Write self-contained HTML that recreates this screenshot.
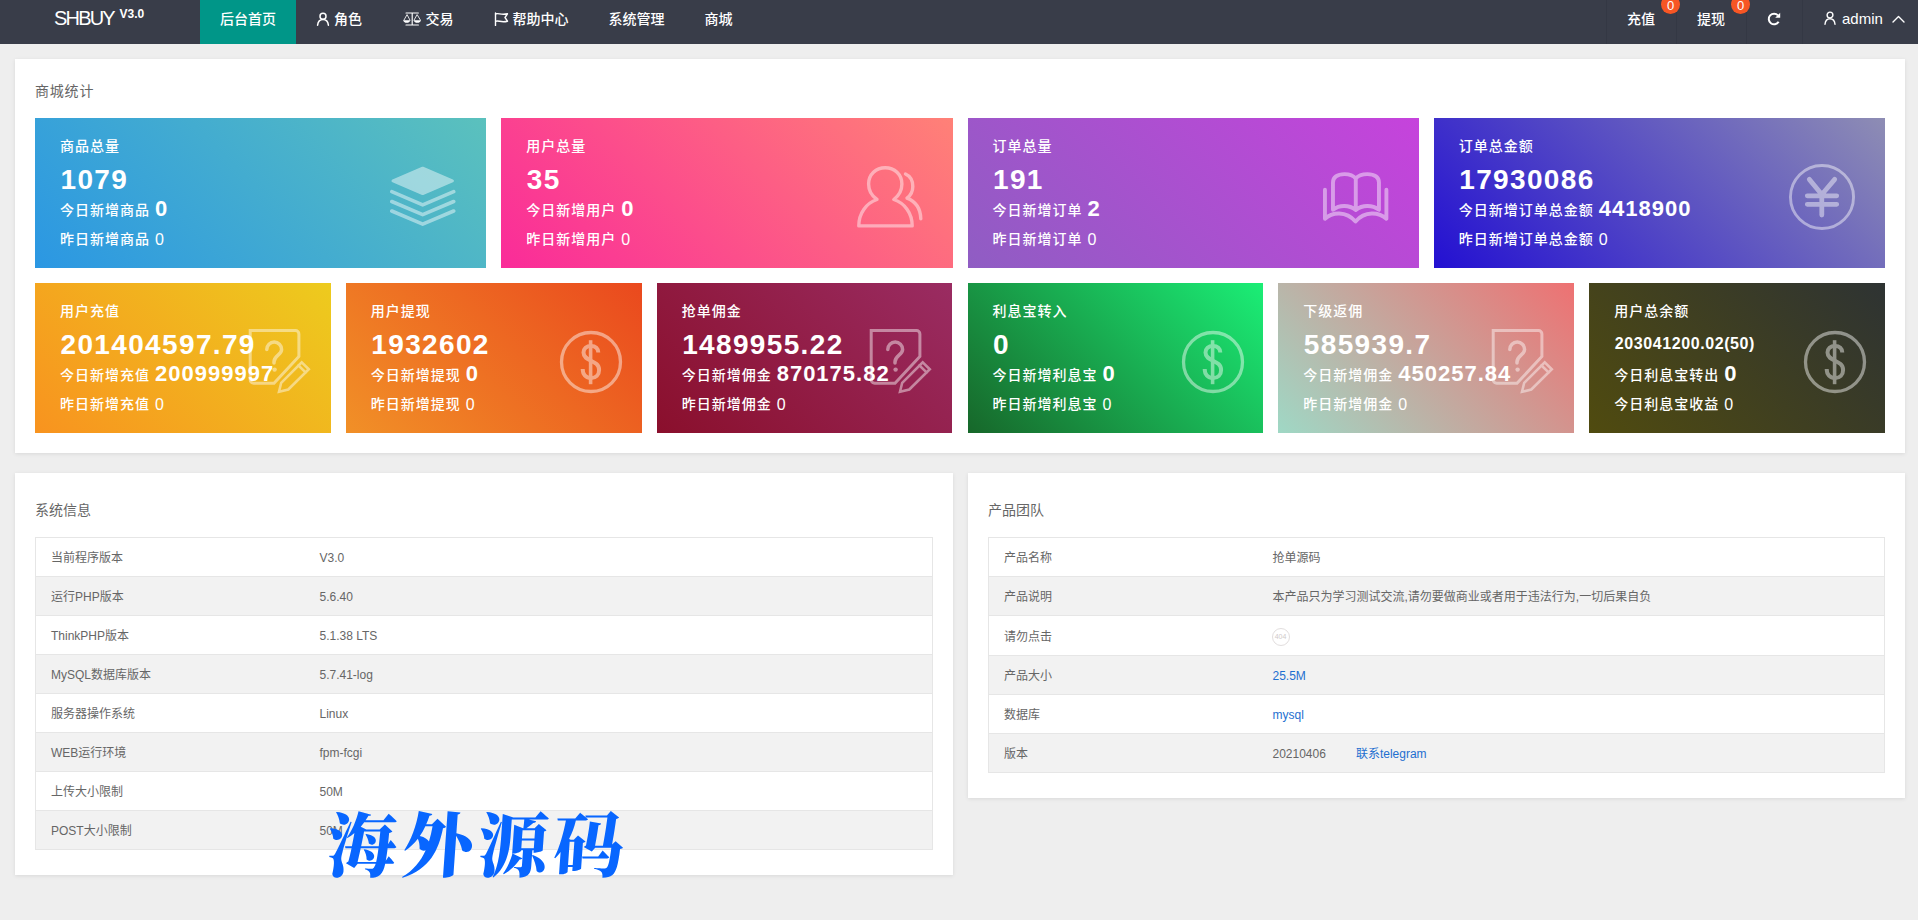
<!DOCTYPE html>
<html lang="zh-CN">
<head>
<meta charset="utf-8">
<title>SHBUY V3.0</title>
<style>
*{box-sizing:border-box;margin:0;padding:0}
html,body{width:1918px;height:920px;overflow:hidden}
body{background:#eeeeee;font-family:"Liberation Sans","Noto Sans CJK SC",sans-serif;font-size:14px;color:#666;position:relative}
a{text-decoration:none;color:inherit}
/* header */
.hd{position:absolute;left:0;top:0;width:1918px;height:44px;background:#393d49;color:#fff;overflow:hidden}
.logo{position:absolute;left:54px;top:6px;font-size:20px;line-height:24px;color:#fff;letter-spacing:-1.800px}
.logo sup{position:absolute;left:65.500px;top:1px;font-size:12px;line-height:14px;font-weight:bold;letter-spacing:0}
.nav{position:absolute;left:200px;top:0;height:44px;display:flex}
.nav .it{font-weight:500;height:44px;line-height:38px;padding:0 20px 6px;font-size:14px;color:#fff;display:flex;align-items:center;white-space:nowrap}
.nav .it.on{background:#009688}
.nav .it svg{display:block;margin-right:5px}
.rnav{position:absolute;right:0;top:0;height:44px;display:flex}
.rnav .it{font-weight:500;position:relative;height:44px;line-height:38px;padding-bottom:6px;border-left:1px solid #343844;color:#fff;font-size:14px;display:flex;align-items:center;white-space:nowrap}
.badge{font-weight:400;position:absolute;z-index:3;top:-5px;width:19px;height:19px;border-radius:10px;background:rgba(255,87,34,.96);color:#fff;font-size:13px;line-height:22px;text-align:center}
/* panels */
.panel{position:absolute;background:#fff;box-shadow:0 1px 4px 0 rgba(0,0,0,.09)}
.ptitle{position:absolute;left:20px;top:22px;font-size:14px;line-height:20px;color:#666}
.card{position:absolute;height:150px;color:#fff;overflow:hidden;font-weight:500}
.card .t{position:absolute;left:25px;top:18px;font-size:14px;line-height:20px;letter-spacing:1px;white-space:nowrap}
.card .n{position:absolute;left:25.5px;top:43px;font-size:28px;line-height:38px;font-weight:bold;letter-spacing:1.35px;white-space:nowrap}
.card .a{position:absolute;left:25px;top:76px;font-size:14px;line-height:30px;letter-spacing:1px;white-space:nowrap}
.card .a b{font-size:22px;letter-spacing:1px;margin-left:5px;vertical-align:-1px}
.card .b{position:absolute;left:25px;top:106px;font-size:14px;line-height:30px;letter-spacing:1px;white-space:nowrap}
.card .b i{font-style:normal;font-weight:400;font-size:16px;letter-spacing:.3px;margin-left:5px;vertical-align:-1px}
.card svg.ic{position:absolute;opacity:.45}
/* tables */
table{position:absolute;border-collapse:collapse;border:1px solid #e6e6e6;font-size:12px;color:#666;table-layout:fixed}
td{height:39px;border-top:1px solid #e6e6e6;border-bottom:1px solid #e6e6e6;padding:2px 15px 0;line-height:20px;white-space:nowrap}
tr:nth-child(even) td{background:#f2f2f2}
.lnk{color:#1e6fd0}
.c404{display:inline-block;position:relative;left:-1px;top:0;width:18px;height:18px;border:1px solid #e2dede;border-radius:50%;font-size:7px;line-height:16px;text-align:center;color:#d0caca;vertical-align:middle}
.wm{position:absolute;left:324px;top:803px;font-family:"Liberation Serif","Noto Serif CJK SC",serif;font-weight:900;font-size:70px;line-height:90px;letter-spacing:5.500px;color:#0866ff;white-space:nowrap;transform:skewX(-4deg);transform-origin:left bottom}
</style>
</head>
<body>
<div class="hd">
  <div class="logo">SHBUY<sup>V3.0</sup></div>
  <div class="nav">
    <div class="it on">后台首页</div>
    <div class="it" style="padding-right:21.500px"><svg width="14" height="14" viewBox="0 0 14 14" fill="none" stroke="#fff" stroke-width="1.5" stroke-linecap="round" style="margin-right:4px"><circle cx="7" cy="4.2" r="3"/><path d="M1.6 13.2c.4-3.4 2.4-5.6 5.4-5.6s5 2.2 5.4 5.6"/></svg>角色</div>
    <div class="it"><svg width="18.500" height="14" viewBox="0 0 18.500 14" style="margin-left:-.6px;margin-right:4.100px"><g stroke="#fff" stroke-width="1.150" fill="none" stroke-linecap="round" stroke-linejoin="round"><path d="M3 1H15.400M9.200 1V13M3 13H15.400"/><path d="M.900 8.200 4.050 2.600 7 8.200M11 8.200 14.100 2.600 17.500 8.200" stroke-width=".85"/></g><path d="M.3 8.200H7.200C7.200 9.700 5.700 10.800 3.750 10.800S.3 9.700 .3 8.200ZM10.800 8.200H17.900C17.900 9.700 16.300 10.800 14.350 10.800S10.800 9.700 10.800 8.200Z" fill="#fff"/></svg>交易</div>
    <div class="it"><svg width="15" height="14" viewBox="0 0 15 14" fill="none" stroke="#fff" stroke-width="1.4" stroke-linecap="round" stroke-linejoin="round" style="margin-right:4px"><path d="M1.500 1v12.500M1.500 2c3-1.500 5 1.500 12-.2L11 5.500l2.500 3.700c-7 1.700-9-1.300-12 .2"/></svg>帮助中心</div>
    <div class="it">系统管理</div>
    <div class="it">商城</div>
  </div>
  <div class="rnav">
    <div class="it" style="width:70px;padding-left:20px">充值<span class="badge" style="left:54px">0</span></div>
    <div class="it" style="width:70px;padding-left:20px">提现<span class="badge" style="left:54px">0</span></div>
    <div class="it" style="width:56px;padding-left:19.700px"><svg width="14" height="14" viewBox="0 0 14 14" fill="none" stroke="#fff" stroke-width="2"><path d="M11.600 9.700A5.300 5.300 0 1 1 11 3.400"/><path d="M13.200.8v5h-5z" fill="#fff" stroke="none"/></svg></div>
    <div class="it" style="width:116px;padding-left:21px"><svg width="12" height="14" viewBox="0 0 12 14" fill="none" stroke="#fff" stroke-width="1.400" stroke-linecap="round" style="margin-right:6px;margin-bottom:2px"><circle cx="6" cy="4" r="2.900"/><path d="M1 13.200c.3-3.300 2.100-5.400 5-5.400s4.700 2.100 5 5.400"/></svg><span style="font-size:15px">admin</span><svg width="13" height="8" viewBox="0 0 13 8" fill="none" stroke="#fff" stroke-width="1.400" stroke-linecap="round" stroke-linejoin="round" style="margin-left:9px"><path d="M1 7l5.500-5.500L12 7"/></svg></div>
  </div>
</div>

<!-- stats panel -->
<div class="panel" id="p1" style="left:15px;top:59px;width:1890px;height:394px">
  <div class="ptitle" style="letter-spacing:.8px">商城统计</div>
<div class="card" style="left:20px;top:59px;width:451.25px;background:linear-gradient(45deg,#2b97e3 0%,#5bc1bd 100%)">
  <div class="t">商品总量</div><div class="n">1079</div>
  <div class="a">今日新增商品<b>0</b></div><div class="b">昨日新增商品<i>0</i></div>
  <svg class="ic" style="right:28px;top:47px" width="70" height="64" viewBox="0 0 70 64"><path d="M34.700 3.300 64.300 15.900 34.700 28.500 5.100 15.900z" fill="#fff" stroke="#fff" stroke-width="3.200" stroke-linejoin="round"/><g fill="none" stroke="#fff" stroke-width="3.600" stroke-linecap="round" stroke-linejoin="round"><path d="M3.800 26.700 34.700 39.900 65.700 26.700"/><path d="M3.800 36.500 34.700 49.700 65.700 36.500"/><path d="M3.800 46 34.700 59.200 65.700 46"/></g></svg>
</div>
<div class="card" style="left:486.25px;top:59px;width:451.25px;background:linear-gradient(45deg,#fa2b99 0%,#ff8177 100%)">
  <div class="t">用户总量</div><div class="n">35</div>
  <div class="a">今日新增用户<b>0</b></div><div class="b">昨日新增用户<i>0</i></div>
  <svg class="ic" style="right:29px;top:46px" width="68" height="66" viewBox="0 0 68 66" fill="none" stroke="#fff" stroke-width="3.400" stroke-linecap="round" stroke-linejoin="round"><path d="M29.200 3.700C38.500 3.700 45.900 10.500 45.900 20C45.900 26.500 42.500 32 37.800 35.500C48.500 39 56.200 49 56.200 61.900H2.800C2.800 49 10.500 39 21 35.500C16 32 12.600 26.500 12.600 20C12.600 10.500 20 3.700 29.200 3.700Z"/><path d="M49.500 10C54 12 56.800 16.500 56.800 22.500C56.800 27.500 54.500 31.500 51 34.200C59.500 37.500 64.500 45 64.800 54.800"/></svg>
</div>
<div class="card" style="left:952.5px;top:59px;width:451.25px;background:linear-gradient(45deg,#8f5dc3 0%,#c643dc 100%)">
  <div class="t">订单总量</div><div class="n">191</div>
  <div class="a">今日新增订单<b>2</b></div><div class="b">昨日新增订单<i>0</i></div>
  <svg class="ic" style="right:29px;top:53px" width="68" height="56" viewBox="0 0 68 56" fill="none" stroke="#fff" stroke-width="3.900" stroke-linecap="round" stroke-linejoin="round"><path d="M2.950 18.700V47.800C10 41 24 39.500 33.500 50.500C43 39.500 57 41 64.400 47.800V18.700"/><path d="M33.770 7.500C31 4 26 3.100 22.500 3.100C15 3.100 10.970 6.500 10.970 11.500V38.800C17 34 27 33.500 33.770 39C40.500 33.500 50.500 34 56.960 38.800V11.500C56.960 6.500 53 3.100 45.400 3.100C41.500 3.100 36.500 4 33.770 7.500V39"/></svg>
</div>
<div class="card" style="left:1418.75px;top:59px;width:451.25px;background:linear-gradient(45deg,#2310d2 0%,#8e8db4 100%)">
  <div class="t">订单总金额</div><div class="n">17930086</div>
  <div class="a">今日新增订单总金额<b>4418900</b></div><div class="b">昨日新增订单总金额<i>0</i></div>
  <svg class="ic" style="left:354.250px;top:44.500px" width="68" height="68" viewBox="0 0 68 68" fill="none" stroke="#fff" stroke-linecap="round" stroke-linejoin="round"><circle cx="34" cy="34" r="31.550" stroke-width="2.900"/><g stroke-width="4.800"><path d="M21.300 16.400 33.800 31.550 46.700 16.400M33.800 31.550V52.100M19.300 32.800H48.700M19.300 41.300H48.700"/></g></svg>
</div>
<div class="card" style="left:20px;top:224px;width:295.83px;background:linear-gradient(45deg,#f8931f 0%,#edcb1e 100%)">
  <div class="t">用户充值</div><div class="n">201404597.79</div>
  <div class="a">今日新增充值<b>200999997</b></div><div class="b">昨日新增充值<i>0</i></div>
  <svg class="ic" style="left:211.600px;top:44px" width="68" height="68" viewBox="0 0 68 68" fill="none" stroke="#fff" stroke-width="3" stroke-linecap="round" stroke-linejoin="round"><path d="M3.200 3.600H48.400a3.500 3.500 0 0 1 3.500 3.500V29.500L27 56.300H6.700a3.500 3.500 0 0 1-3.500-3.500Z" stroke-linejoin="miter"/><path d="M19.800 22.500a7.400 7.400 0 0 1 14.800 0c0 5.500-7.600 6-7.600 12.500v1" stroke-width="3.500"/><circle cx="27.600" cy="42.600" r="2.200" fill="#fff" stroke="none"/><path d="M34.200 55.800 54.700 35.300 61.800 42.200 41.300 62.500 32 64.800Z" stroke-width="2.600" stroke-linejoin="miter"/><path d="M51.500 38.500 58.600 45.400" stroke-width="2.600"/></svg>
</div>
<div class="card" style="left:330.83px;top:224px;width:295.83px;background:linear-gradient(45deg,#f19027 0%,#ea491e 100%)">
  <div class="t">用户提现</div><div class="n">1932602</div>
  <div class="a">今日新增提现<b>0</b></div><div class="b">昨日新增提现<i>0</i></div>
  <svg class="ic" style="left:213.400px;top:47px" width="64" height="64" viewBox="0 0 64 64" fill="none" stroke="#fff" stroke-linejoin="round"><circle cx="32" cy="32" r="29.500" stroke-width="3.300"/><path d="M31.600 10.200V54.200" stroke-width="3.600"/><path d="M39.300 22.600C39.300 18.500 36.500 15.900 32 15.900C27.500 15.900 24.500 18.700 24.500 22.600C24.500 32 40.100 29.500 40.100 40C40.100 44.800 36.800 48 32 48C27 48 23.700 44.800 23.700 39.100" stroke-width="4"/></svg>
</div>
<div class="card" style="left:641.67px;top:224px;width:295.83px;background:linear-gradient(45deg,#8a0f2c 0%,#9a2c62 100%)">
  <div class="t">抢单佣金</div><div class="n">1489955.22</div>
  <div class="a">今日新增佣金<b>870175.82</b></div><div class="b">昨日新增佣金<i>0</i></div>
  <svg class="ic" style="left:211.600px;top:44px" width="68" height="68" viewBox="0 0 68 68" fill="none" stroke="#fff" stroke-width="3" stroke-linecap="round" stroke-linejoin="round"><path d="M3.200 3.600H48.400a3.500 3.500 0 0 1 3.500 3.500V29.500L27 56.300H6.700a3.500 3.500 0 0 1-3.500-3.500Z" stroke-linejoin="miter"/><path d="M19.800 22.500a7.400 7.400 0 0 1 14.800 0c0 5.500-7.600 6-7.600 12.500v1" stroke-width="3.500"/><circle cx="27.600" cy="42.600" r="2.200" fill="#fff" stroke="none"/><path d="M34.200 55.800 54.700 35.300 61.800 42.200 41.300 62.500 32 64.800Z" stroke-width="2.600" stroke-linejoin="miter"/><path d="M51.500 38.500 58.600 45.400" stroke-width="2.600"/></svg>
</div>
<div class="card" style="left:952.5px;top:224px;width:295.83px;background:linear-gradient(45deg,#17672a 0%,#1bee76 100%)">
  <div class="t">利息宝转入</div><div class="n">0</div>
  <div class="a">今日新增利息宝<b>0</b></div><div class="b">昨日新增利息宝<i>0</i></div>
  <svg class="ic" style="left:213.400px;top:47px" width="64" height="64" viewBox="0 0 64 64" fill="none" stroke="#fff" stroke-linejoin="round"><circle cx="32" cy="32" r="29.500" stroke-width="3.300"/><path d="M31.600 10.200V54.200" stroke-width="3.600"/><path d="M39.300 22.600C39.300 18.500 36.500 15.900 32 15.900C27.500 15.900 24.500 18.700 24.500 22.600C24.500 32 40.100 29.500 40.100 40C40.100 44.800 36.800 48 32 48C27 48 23.700 44.800 23.700 39.100" stroke-width="4"/></svg>
</div>
<div class="card" style="left:1263.33px;top:224px;width:295.83px;background:linear-gradient(45deg,#9fd8c5 0%,#ee7172 100%)">
  <div class="t">下级返佣</div><div class="n">585939.7</div>
  <div class="a">今日新增佣金<b>450257.84</b></div><div class="b">昨日新增佣金<i>0</i></div>
  <svg class="ic" style="left:211.600px;top:44px" width="68" height="68" viewBox="0 0 68 68" fill="none" stroke="#fff" stroke-width="3" stroke-linecap="round" stroke-linejoin="round"><path d="M3.200 3.600H48.400a3.500 3.500 0 0 1 3.500 3.500V29.500L27 56.300H6.700a3.500 3.500 0 0 1-3.500-3.500Z" stroke-linejoin="miter"/><path d="M19.800 22.500a7.400 7.400 0 0 1 14.800 0c0 5.500-7.600 6-7.600 12.500v1" stroke-width="3.500"/><circle cx="27.600" cy="42.600" r="2.200" fill="#fff" stroke="none"/><path d="M34.200 55.800 54.700 35.300 61.800 42.200 41.300 62.500 32 64.800Z" stroke-width="2.600" stroke-linejoin="miter"/><path d="M51.500 38.500 58.600 45.400" stroke-width="2.600"/></svg>
</div>
<div class="card" style="left:1574.17px;top:224px;width:295.83px;background:linear-gradient(45deg,#504b0f 0%,#2e3333 100%)">
  <div class="t">用户总余额</div><div class="n" style="font-size:16px;letter-spacing:.6px;top:42px">203041200.02(50)</div>
  <div class="a">今日利息宝转出<b>0</b></div><div class="b">今日利息宝收益<i>0</i></div>
  <svg class="ic" style="left:213.400px;top:47px" width="64" height="64" viewBox="0 0 64 64" fill="none" stroke="#fff" stroke-linejoin="round"><circle cx="32" cy="32" r="29.500" stroke-width="3.300"/><path d="M31.600 10.200V54.200" stroke-width="3.600"/><path d="M39.300 22.600C39.300 18.500 36.500 15.900 32 15.900C27.500 15.900 24.500 18.700 24.500 22.600C24.500 32 40.100 29.500 40.100 40C40.100 44.800 36.800 48 32 48C27 48 23.700 44.800 23.700 39.100" stroke-width="4"/></svg>
</div>
</div>

<!-- system info -->
<div class="panel" id="p2" style="left:15px;top:473px;width:938px;height:402px">
  <div class="ptitle" style="top:27px">系统信息</div>
<table style="left:20px;top:64px;width:898px"><colgroup><col style="width:269px"><col></colgroup>
<tr><td>当前程序版本</td><td>V3.0</td></tr>
<tr><td>运行PHP版本</td><td>5.6.40</td></tr>
<tr><td>ThinkPHP版本</td><td>5.1.38 LTS</td></tr>
<tr><td>MySQL数据库版本</td><td>5.7.41-log</td></tr>
<tr><td>服务器操作系统</td><td>Linux</td></tr>
<tr><td>WEB运行环境</td><td>fpm-fcgi</td></tr>
<tr><td>上传大小限制</td><td>50M</td></tr>
<tr><td>POST大小限制</td><td>50M</td></tr>
</table>
</div>

<!-- product team -->
<div class="panel" id="p3" style="left:968px;top:473px;width:937px;height:325px">
  <div class="ptitle" style="top:27px">产品团队</div>
<table style="left:20px;top:64px;width:897px"><colgroup><col style="width:269px"><col></colgroup>
<tr><td>产品名称</td><td>抢单源码</td></tr>
<tr><td>产品说明</td><td>本产品只为学习测试交流,请勿要做商业或者用于违法行为,一切后果自负</td></tr>
<tr><td style="height:40px">请勿点击</td><td><span class="c404">404</span></td></tr>
<tr><td>产品大小</td><td><span class="lnk">25.5M</span></td></tr>
<tr><td>数据库</td><td><span class="lnk">mysql</span></td></tr>
<tr><td>版本</td><td>20210406<span class="lnk" style="margin-left:30px">联系telegram</span></td></tr>
</table>
</div>

<div class="wm">海外源码</div>
</body>
</html>
